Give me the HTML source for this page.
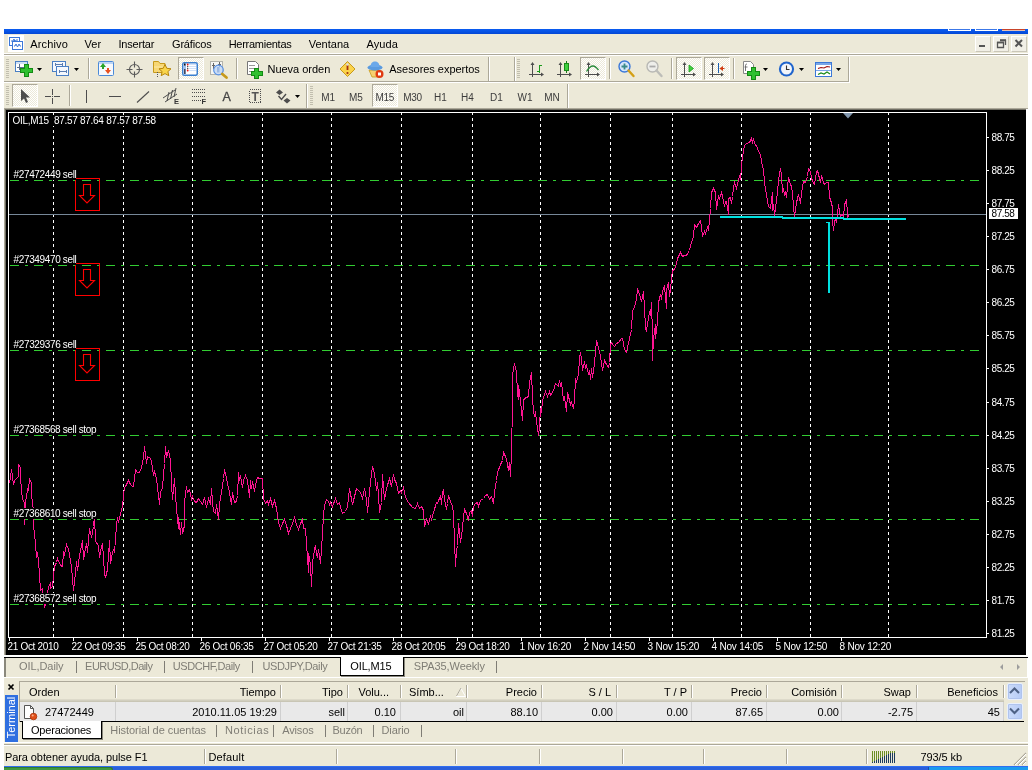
<!DOCTYPE html><html><head><meta charset="utf-8"><title>OIL,M15</title><style>
*{box-sizing:border-box;margin:0;padding:0}
html,body{width:1032px;height:770px;overflow:hidden;background:#fff}
body{position:relative;font-family:"Liberation Sans",sans-serif;font-size:11px;color:#000}
.a{position:absolute}
.t{position:absolute;white-space:pre;line-height:13px;height:13px}
.g{color:#7f7d75}
.win{left:4px;top:29px;width:1024px;height:737px;background:#ECE9D8}
.r{text-align:right}
.sep{position:absolute;width:2px;border-left:1px solid #aca899;border-right:1px solid #fff}
.grip{position:absolute;width:3px;background:repeating-linear-gradient(to bottom,#b5b2a3 0,#b5b2a3 1px,transparent 1px,transparent 2px)}
.pressed{position:absolute;border:1px solid;border-color:#aca899 #fff #fff #aca899;background-color:#ece9d8;background-image:conic-gradient(#fff 25%,#ece9d8 0 50%,#fff 0 75%,#ece9d8 0);background-size:2px 2px}
.ch{font-size:9px;line-height:11px;height:11px;color:#fff;background:#000;position:absolute;white-space:pre}
</style></head><body><div id="w" style="position:absolute;left:0;top:0;width:1032px;height:770px;will-change:transform">
<div class="a win"></div>
<div class="a" style="left:4px;top:29px;width:1024px;height:5px;background:linear-gradient(to bottom,#0a5cf0 0,#0855e8 40%,#0447d4 100%)"></div>
<div class="a" style="left:948px;top:29px;width:23px;height:2px;background:#3c78e8;border-bottom:1px solid #fff;border-left:1px solid #fff;border-right:1px solid #fff"></div>
<div class="a" style="left:975px;top:29px;width:23px;height:2px;background:#3c78e8;border-bottom:1px solid #fff;border-left:1px solid #fff;border-right:1px solid #fff"></div>
<div class="a" style="left:1002px;top:29px;width:23px;height:2px;background:#c8442a;border-bottom:1px solid #e8c0b0"></div>
<div class="a" style="left:4px;top:53px;width:1024px;height:1px;background:#fff"></div>
<div class="a" style="left:4px;top:54px;width:1024px;height:1px;background:#aca899"></div>
<div class="a" style="left:4px;top:55px;width:1024px;height:1px;background:#fff"></div>
<div class="t" style="left:30.2px;top:38px;letter-spacing:0.16px;">Archivo</div>
<div class="t" style="left:84.5px;top:38px;letter-spacing:0.10px;">Ver</div>
<div class="t" style="left:118.5px;top:38px;letter-spacing:-0.20px;">Insertar</div>
<div class="t" style="left:172.0px;top:38px;letter-spacing:-0.18px;">Gráficos</div>
<div class="t" style="left:228.7px;top:38px;letter-spacing:-0.27px;">Herramientas</div>
<div class="t" style="left:308.7px;top:38px;letter-spacing:0.02px;">Ventana</div>
<div class="t" style="left:366.5px;top:38px;letter-spacing:0.08px;">Ayuda</div>
<div class="a" style="left:4px;top:81px;width:845px;height:1px;background:#aca899"></div>
<div class="a" style="left:4px;top:82px;width:846px;height:1px;background:#fff"></div>
<div class="pressed" style="left:178px;top:57px;width:26px;height:23px"></div>
<div class="pressed" style="left:580px;top:57px;width:26px;height:23px"></div>
<div class="pressed" style="left:676px;top:57px;width:26px;height:23px"></div>
<div class="pressed" style="left:704px;top:57px;width:26px;height:23px"></div>
<div class="pressed" style="left:12px;top:84px;width:26px;height:23px"></div>
<div class="pressed" style="left:372px;top:84px;width:26px;height:23px"></div>
<svg class="a" style="left:0;top:0" width="1032" height="770" viewBox="0 0 1032 770" fill="none"><rect x="8" y="35" width="16" height="17" fill="#fff"/><g fill="#fff" stroke="#3b78d8" stroke-width="1" shape-rendering="crispEdges"><rect x="9.5" y="37.5" width="10" height="8"/><rect x="12.5" y="41.5" width="10" height="8"/></g><path d="M11 41h2l1-2 1 3 1-2h2M14 46h1l1-2 1.500 3 1.500-3 1 2h1" stroke="#3b78d8" fill="none" stroke-width="1"/><g shape-rendering="crispEdges" stroke="#c1beae"><path d="M6 59.5h3"/><path d="M6 61.5h3"/><path d="M6 63.5h3"/><path d="M6 65.5h3"/><path d="M6 67.5h3"/><path d="M6 69.5h3"/><path d="M6 71.5h3"/><path d="M6 73.5h3"/><path d="M6 75.5h3"/><path d="M6 77.5h3"/></g><g shape-rendering="crispEdges" stroke="#c1beae"><path d="M517 59.5h3"/><path d="M517 61.5h3"/><path d="M517 63.5h3"/><path d="M517 65.5h3"/><path d="M517 67.5h3"/><path d="M517 69.5h3"/><path d="M517 71.5h3"/><path d="M517 73.5h3"/><path d="M517 75.5h3"/><path d="M517 77.5h3"/></g><g shape-rendering="crispEdges" stroke="#c1beae"><path d="M6 86.5h3"/><path d="M6 88.5h3"/><path d="M6 90.5h3"/><path d="M6 92.5h3"/><path d="M6 94.5h3"/><path d="M6 96.5h3"/><path d="M6 98.5h3"/><path d="M6 100.5h3"/><path d="M6 102.5h3"/><path d="M6 104.5h3"/></g><g shape-rendering="crispEdges" stroke="#c1beae"><path d="M310 86.5h3"/><path d="M310 88.5h3"/><path d="M310 90.5h3"/><path d="M310 92.5h3"/><path d="M310 94.5h3"/><path d="M310 96.5h3"/><path d="M310 98.5h3"/><path d="M310 100.5h3"/><path d="M310 102.5h3"/><path d="M310 104.5h3"/></g><g shape-rendering="crispEdges"><rect x="15.5" y="61.5" width="12" height="10" fill="#fff" stroke="#4a7fc4"/><rect x="16" y="62" width="11" height="2" fill="#cfe0f5"/><path d="M19.500 64v6M17 67.500h8" stroke="#5a6f8f"/></g><path d="M24 64h4v4h4v4h-4v4h-4v-4h-4v-4h4z" fill="#2fc02f" stroke="#148a14" stroke-width="1" shape-rendering="crispEdges"/><path d="M37 68h5l-2.5 3z" fill="#000"/><g shape-rendering="crispEdges" fill="#f4f8fd" stroke="#4a7fc4"><rect x="52.500" y="61.500" width="13" height="10"/><rect x="56.500" y="66.500" width="12" height="9"/></g><path d="M55 64.500h8M59 71.500h8M55.500 63v3M62.500 63v3M59.500 70v3M66.500 70v3" stroke="#5a7db0" shape-rendering="crispEdges"/><path d="M74 68h5l-2.5 3z" fill="#000"/><path d="M88.5 58V79" stroke="#aca899" shape-rendering="crispEdges"/><path d="M89.5 58V79" stroke="#fff" shape-rendering="crispEdges"/><path d="M236.5 58V79" stroke="#aca899" shape-rendering="crispEdges"/><path d="M237.5 58V79" stroke="#fff" shape-rendering="crispEdges"/><path d="M609.5 58V79" stroke="#aca899" shape-rendering="crispEdges"/><path d="M610.5 58V79" stroke="#fff" shape-rendering="crispEdges"/><path d="M671.5 58V79" stroke="#aca899" shape-rendering="crispEdges"/><path d="M672.5 58V79" stroke="#fff" shape-rendering="crispEdges"/><path d="M733.5 58V79" stroke="#aca899" shape-rendering="crispEdges"/><path d="M734.5 58V79" stroke="#fff" shape-rendering="crispEdges"/><rect x="98.500" y="61.500" width="15" height="14" fill="#f6f9fd" stroke="#4a8ad8" rx="1"/><rect x="99" y="62" width="14" height="2" fill="#bcd5f5"/><path d="M103 63l-3 4h2v2h2v-2h2z" fill="#2aa52a"/><path d="M108 74l-3 -4h2v-2h2v2h2z" fill="#e8501e"/><circle cx="134.500" cy="69.500" r="5" fill="none" stroke="#5a5a5a" stroke-width="1.1"/><path d="M134.500 61.500v6M134.500 71.500v6M126.500 69.500h6M136.500 69.500h6" stroke="#5a5a5a" stroke-width="1.1"/><g transform="translate(0,1)"><path d="M153.500 63v-2.500h5l1.500 2h5v9h-11.500z" fill="#f7d774" stroke="#c79a1b"/><path d="M154 66h11" stroke="#fbe9a8"/></g><path d="M165 64.500l1.800 3.800 4.200 .5-3.100 2.800.9 4.100-3.800-2.100-3.800 2.100.9-4.100-3.100-2.800 4.200-.5z" fill="#f9d54a" stroke="#b8860b" stroke-width="1"/><path d="M157.500 72v5" stroke="#555" stroke-dasharray="1 1" shape-rendering="crispEdges"/><rect x="182.750" y="62.750" width="14.500" height="12.500" rx="1.500" fill="#fff" stroke="#3a7fd0" stroke-width="1.500"/><rect x="183.500" y="63.500" width="2.500" height="11" fill="#9ec0ee"/><rect x="184" y="63.500" width="1.500" height="2" fill="#111"/><rect x="184" y="69" width="1.500" height="5" fill="#445"/><g shape-rendering="crispEdges"><path d="M189 64.500h7M189 66.500h7M189 68.500h7M189 70.500h7" stroke="#cfe0f8"/></g><circle cx="187.700" cy="64.500" r=".9" fill="#f01010"/><circle cx="187.700" cy="70.500" r=".9" fill="#f01010"/><circle cx="187.700" cy="66.500" r=".7" fill="#444"/><circle cx="187.700" cy="68.500" r=".7" fill="#444"/><rect x="210.500" y="61.500" width="12" height="13" fill="#f6f6f2" stroke="#b4b4ac"/><path d="M213.500 63v6M219.500 62v5M212 65.500h3M218 64.500h3" stroke="#666" shape-rendering="crispEdges"/><circle cx="218.500" cy="70" r="4.800" fill="#bcd4f6" fill-opacity=".75" stroke="#5a92e4" stroke-width="1.200"/><path d="M217 67v5.500h2.500v-5.500" fill="#8fb0e0" fill-opacity=".8"/><path d="M222.300 74l4.200 3.500" stroke="#c79a1b" stroke-width="2.800" stroke-linecap="round"/><path d="M247.500 61.500h8l3 3v10h-11z" fill="#fff" stroke="#777"/><path d="M249 65.500h6M249 68.500h6M249 71.500h4" stroke="#999" shape-rendering="crispEdges"/><path d="M254 68h4v3h4v4h-4v3h-4v-3h-3v-4h3z" fill="#2fc02f" stroke="#148a14" shape-rendering="crispEdges"/><g transform="translate(0,1)"><path d="M347.500 60.500l7.500 7.500-7.500 7.500-7.500-7.500z" fill="#fbd34a" stroke="#c79a1b"/><path d="M347.500 64v5" stroke="#a03010" stroke-width="1.800"/><circle cx="347.500" cy="72" r="1.100" fill="#a03010"/><circle cx="347.500" cy="63.500" r="1.300" fill="#ddd"/></g><g transform="translate(0,1)"><path d="M369 69l3 7h7l2-6z" fill="#f6d070" stroke="#c79a1b" stroke-width=".8"/><ellipse cx="375" cy="66.500" rx="7.500" ry="3" fill="#5a9be0"/><path d="M370.500 66c0-4 2-5.500 4.500-5.500s4.500 1.500 4.500 5.500z" fill="#6aa8ea"/><circle cx="379.500" cy="73" r="4" fill="#e03a10"/><rect x="378" y="71.500" width="3" height="3" fill="#fff"/></g><path d="M488.500 57V81" stroke="#aca899" shape-rendering="crispEdges"/><path d="M489.500 57V81" stroke="#fff" shape-rendering="crispEdges"/><path d="M514.500 57V81" stroke="#aca899" shape-rendering="crispEdges"/><path d="M515.500 57V81" stroke="#fff" shape-rendering="crispEdges"/><path d="M848.500 57V82" stroke="#aca899" shape-rendering="crispEdges"/><path d="M849.500 57V83" stroke="#fff" shape-rendering="crispEdges"/><g stroke="#4d4d4d" stroke-width="1" fill="none" shape-rendering="crispEdges"><path d="M532.5 64V77M529 74.5H543"/></g><path d="M532.5 62l-2 3h4zM544 74.5l-3 -2v4z" fill="#4d4d4d"/><path d="M539.500 65v8M539 65.500h3M537 71.500h3" stroke="#1a9a1a" stroke-width="1" shape-rendering="crispEdges"/><g stroke="#4d4d4d" stroke-width="1" fill="none" shape-rendering="crispEdges"><path d="M560.5 64V77M557 74.5H571"/></g><path d="M560.5 62l-2 3h4zM572 74.5l-3 -2v4z" fill="#4d4d4d"/><path d="M566.500 61v12" stroke="#1a7a1a" shape-rendering="crispEdges"/><rect x="564.500" y="63.500" width="4" height="7" fill="#3fd03f" stroke="#1a8a1a" shape-rendering="crispEdges"/><g stroke="#4d4d4d" stroke-width="1" fill="none" shape-rendering="crispEdges"><path d="M588.5 64V77M585 74.5H599"/></g><path d="M588.5 62l-2 3h4zM600 74.5l-3 -2v4z" fill="#4d4d4d"/><path d="M586.500 71.500c2.500-4 4.500-5.500 6.500-5.500s3.500 1.500 5.500 4" fill="none" stroke="#2a8a3a" stroke-width="1.300"/><circle cx="624.500" cy="66.500" r="5.500" fill="#d6e6fb" stroke="#3b78d8" stroke-width="1.400"/><path d="M621.500 66.500h6M624.500 63.500v6" stroke="#3a8a8a" stroke-width="1.800"/><path d="M628.500 70.500l5 5.500" stroke="#d4a017" stroke-width="2.400" stroke-linecap="round"/><circle cx="652.500" cy="66.500" r="5.500" fill="#eeeeea" stroke="#b8b8b4" stroke-width="1.400"/><path d="M649.500 66.500h6" stroke="#aaa" stroke-width="1.800"/><path d="M656.500 70.500l5 5.500" stroke="#bdbdb8" stroke-width="2.400" stroke-linecap="round"/><g stroke="#4d4d4d" stroke-width="1" fill="none" shape-rendering="crispEdges"><path d="M684.5 64V77M681 74.5H695"/></g><path d="M684.5 62l-2 3h4zM696 74.5l-3 -2v4z" fill="#4d4d4d"/><path d="M689 65l4.500 3.500-4.500 3.500z" fill="#3fd03f" stroke="#1a9a1a" stroke-width=".8"/><g stroke="#4d4d4d" stroke-width="1" fill="none" shape-rendering="crispEdges"><path d="M712.5 64V77M709 74.5H723"/></g><path d="M712.5 62l-2 3h4zM724 74.5l-3 -2v4z" fill="#4d4d4d"/><path d="M718.500 63v10" stroke="#1a5fb0" stroke-width="1" shape-rendering="crispEdges"/><path d="M719.500 68.500l3.500-2.500v5z" fill="#d03a10"/><path d="M722 68.500h2.500" stroke="#d03a10"/><path d="M743.500 61.500h7l3 3v9h-10z" fill="#fff" stroke="#888"/><path d="M747 64c-1.500 0-1.500 1-1.500 2v5M744.500 67h3" stroke="#666" fill="none" stroke-width=".9"/><path d="M751 67h4v4h4v4h-4v4h-4v-4h-4v-4h4z" fill="#2fc02f" stroke="#148a14" shape-rendering="crispEdges"/><path d="M763 68h5l-2.5 3z" fill="#000"/><circle cx="786.500" cy="69" r="7.600" fill="#1f64cc"/><circle cx="786.500" cy="69" r="5.500" fill="#f2f5fa"/><path d="M786.500 65.500v4h3" stroke="#333" stroke-width="1.100" fill="none"/><path d="M799 68h5l-2.5 3z" fill="#000"/><g transform="translate(0,1)"><rect x="815.500" y="61.500" width="16" height="14" fill="#fff" stroke="#3b78d8"/><rect x="816" y="62" width="15" height="2" fill="#7aa7e8"/><path d="M816 69.500h15" stroke="#7aa7e8" shape-rendering="crispEdges"/></g><g transform="translate(0,1)"><path d="M818 67.500l3-1 3 .5 3-1.500 3 .5" stroke="#a01010" fill="none" stroke-width="1.200"/><path d="M818 73.500l3-1.500 3 1 3-2 3 2" stroke="#1a8a1a" fill="none" stroke-width="1.200"/></g><path d="M836 68h5l-2.5 3z" fill="#000"/><path d="M21 89v12l3-2.500 2 4.500 2-1-2-4.500h4z" fill="#4d4d4d"/><path d="M52.500 89v15M45 96.500h15" stroke="#4d4d4d" shape-rendering="crispEdges"/><rect x="51" y="95" width="3" height="3" fill="#ece9d8"/><rect x="52" y="96" width="1" height="1" fill="#4d4d4d"/><path d="M69.5 85V106" stroke="#aca899" shape-rendering="crispEdges"/><path d="M70.5 85V106" stroke="#fff" shape-rendering="crispEdges"/><path d="M86.500 90v13" stroke="#4d4d4d" shape-rendering="crispEdges"/><path d="M109 96.500h12" stroke="#4d4d4d" shape-rendering="crispEdges"/><path d="M137 102.500l12-11" stroke="#4d4d4d" stroke-width="1.100"/><path d="M163 98l12-8M165 102l12-8M167 101l2-9M170.500 99l2-9M174 97l2-9" stroke="#4d4d4d" stroke-width="1" fill="none"/><g stroke="#4d4d4d" stroke-dasharray="1 1" shape-rendering="crispEdges"><path d="M192 89.500h13M192 92.500h13M192 96.500h13M192 100.500h9"/></g><path d="M276 92.500L279.500 89.500L283 92.500L279.500 95Z M283.500 100.500L287 98L290.500 100.500L287 103.500Z" fill="#4d4d4d"/><path d="M278.500 96l3 3.500 4.500-5.500" stroke="#4d4d4d" fill="none" stroke-width="1.400"/><path d="M295 95h5l-2.5 3z" fill="#000"/><rect x="249.500" y="89.500" width="11" height="13" fill="none" stroke="#4d4d4d" stroke-dasharray="1 1" shape-rendering="crispEdges"/><path d="M306.500 84V108" stroke="#aca899" shape-rendering="crispEdges"/><path d="M307.500 84V108" stroke="#fff" shape-rendering="crispEdges"/><path d="M567.500 84V108" stroke="#aca899" shape-rendering="crispEdges"/><path d="M568.500 84V108" stroke="#fff" shape-rendering="crispEdges"/></svg>
<div class="t" style="left:267.5px;top:63px;letter-spacing:-0.02px;">Nueva orden</div>
<div class="t" style="left:389.3px;top:63px;letter-spacing:-0.04px;">Asesores expertos</div>
<div class="t" style="left:222.500px;top:90px;font-size:12.500px;color:#444;line-height:15px;height:15px;-webkit-text-stroke:.3px #444">A</div>
<div class="t" style="left:174px;top:97px;font-size:7.500px;font-weight:bold;color:#333;line-height:9px;height:9px">E</div>
<div class="t" style="left:201.500px;top:97px;font-size:7.500px;font-weight:bold;color:#333;line-height:9px;height:9px">F</div>
<div class="t" style="left:251.500px;top:90px;font-size:12px;font-weight:bold;color:#555;line-height:14px;height:14px">T</div>
<div class="t" style="left:321.3px;top:91px;letter-spacing:-0.15px;font-size:10px;color:#3c3c3c;">M1</div>
<div class="t" style="left:349.0px;top:91px;letter-spacing:-0.20px;font-size:10px;color:#3c3c3c;">M5</div>
<div class="t" style="left:375.5px;top:91px;letter-spacing:-0.28px;font-size:10px;color:#3c3c3c;">M15</div>
<div class="t" style="left:403.2px;top:91px;letter-spacing:-0.28px;font-size:10px;color:#3c3c3c;">M30</div>
<div class="t" style="left:434.1px;top:91px;letter-spacing:-0.19px;font-size:10px;color:#3c3c3c;">H1</div>
<div class="t" style="left:461.1px;top:91px;letter-spacing:-0.19px;font-size:10px;color:#3c3c3c;">H4</div>
<div class="t" style="left:490.1px;top:91px;letter-spacing:-0.19px;font-size:10px;color:#3c3c3c;">D1</div>
<div class="t" style="left:517.5px;top:91px;letter-spacing:0.00px;font-size:10px;color:#3c3c3c;">W1</div>
<div class="t" style="left:544.3px;top:91px;letter-spacing:-0.08px;font-size:10px;color:#3c3c3c;">MN</div>
<div class="a" style="left:975px;top:36px;width:16px;height:16px;background:#f1efe6;border:1px solid;border-color:#fff #c9c6b8 #c9c6b8 #fff"></div>
<div class="a" style="left:993px;top:36px;width:16px;height:16px;background:#f1efe6;border:1px solid;border-color:#fff #c9c6b8 #c9c6b8 #fff"></div>
<div class="a" style="left:1011px;top:36px;width:16px;height:16px;background:#f1efe6;border:1px solid;border-color:#fff #c9c6b8 #c9c6b8 #fff"></div>
<svg class="a" style="left:0;top:0" width="1032" height="770" viewBox="0 0 1032 770" fill="none"><path d="M979 46h6" stroke="#555" stroke-width="2"/><path d="M997.500 42.500h6v5h-6zM1000 40.500h5.500v4.500" stroke="#555" stroke-width="1.300"/><path d="M997 42.500h7M1000 40h6" stroke="#555" stroke-width="1.600"/><path d="M1015.500 40l6.500 6.500M1022 40l-6.500 6.500" stroke="#555" stroke-width="2"/></svg>
<div class="a" style="left:4px;top:108px;width:1024px;height:1px;background:#aca899"></div>
<div class="a" style="left:4px;top:109px;width:1px;height:546px;background:#aca899"></div>
<div class="a" style="left:5px;top:109px;width:1021px;height:546px;background:#000;border-left:1px solid #716f64;border-top:1px solid #716f64"></div>
<div class="a" style="left:1026px;top:109px;width:2px;height:548px;background:#fff"></div>
<svg class="a" style="left:0;top:0" width="1032" height="770" viewBox="0 0 1032 770" shape-rendering="crispEdges" fill="none">
<path d="M8.5 637.5V112.5H986.5V637.5H8.5" stroke="#fff" stroke-width="1"/>
<path d="M53.5 112V637" stroke="#fff" stroke-width="1" stroke-dasharray="3 3"/>
<path d="M123.5 112V637" stroke="#fff" stroke-width="1" stroke-dasharray="3 3"/>
<path d="M192.5 112V637" stroke="#fff" stroke-width="1" stroke-dasharray="3 3"/>
<path d="M262.5 112V637" stroke="#fff" stroke-width="1" stroke-dasharray="3 3"/>
<path d="M331.5 112V637" stroke="#fff" stroke-width="1" stroke-dasharray="3 3"/>
<path d="M401.5 112V637" stroke="#fff" stroke-width="1" stroke-dasharray="3 3"/>
<path d="M472.5 112V637" stroke="#fff" stroke-width="1" stroke-dasharray="3 3"/>
<path d="M540.5 112V637" stroke="#fff" stroke-width="1" stroke-dasharray="3 3"/>
<path d="M610.5 112V637" stroke="#fff" stroke-width="1" stroke-dasharray="3 3"/>
<path d="M672.5 112V637" stroke="#fff" stroke-width="1" stroke-dasharray="3 3"/>
<path d="M741.5 112V637" stroke="#fff" stroke-width="1" stroke-dasharray="3 3"/>
<path d="M810.5 112V637" stroke="#fff" stroke-width="1" stroke-dasharray="3 3"/>
<path d="M888.5 112V637" stroke="#fff" stroke-width="1" stroke-dasharray="3 3"/>
<path d="M10 180.5H984" stroke="#32cd32" stroke-width="1" stroke-dasharray="9 6 3 6"/>
<path d="M10 265.5H984" stroke="#32cd32" stroke-width="1" stroke-dasharray="9 6 3 6"/>
<path d="M10 350.5H984" stroke="#32cd32" stroke-width="1" stroke-dasharray="9 6 3 6"/>
<path d="M10 435.5H984" stroke="#32cd32" stroke-width="1" stroke-dasharray="9 6 3 6"/>
<path d="M10 519.5H984" stroke="#32cd32" stroke-width="1" stroke-dasharray="9 6 3 6"/>
<path d="M10 604.5H984" stroke="#32cd32" stroke-width="1" stroke-dasharray="9 6 3 6"/>
<path d="M9 214.5H986" stroke="#778899" stroke-width="1"/>
<path d="M987 137.5H989" stroke="#fff"/>
<path d="M987 170.5H989" stroke="#fff"/>
<path d="M987 203.5H989" stroke="#fff"/>
<path d="M987 236.5H989" stroke="#fff"/>
<path d="M987 269.5H989" stroke="#fff"/>
<path d="M987 302.5H989" stroke="#fff"/>
<path d="M987 335.5H989" stroke="#fff"/>
<path d="M987 368.5H989" stroke="#fff"/>
<path d="M987 402.5H989" stroke="#fff"/>
<path d="M987 435.5H989" stroke="#fff"/>
<path d="M987 468.5H989" stroke="#fff"/>
<path d="M987 501.5H989" stroke="#fff"/>
<path d="M987 534.5H989" stroke="#fff"/>
<path d="M987 567.5H989" stroke="#fff"/>
<path d="M987 600.5H989" stroke="#fff"/>
<path d="M987 633.5H989" stroke="#fff"/>
<path d="M9.5 638V641" stroke="#fff"/>
<path d="M73.5 638V641" stroke="#fff"/>
<path d="M137.5 638V641" stroke="#fff"/>
<path d="M201.5 638V641" stroke="#fff"/>
<path d="M265.5 638V641" stroke="#fff"/>
<path d="M329.5 638V641" stroke="#fff"/>
<path d="M393.5 638V641" stroke="#fff"/>
<path d="M457.5 638V641" stroke="#fff"/>
<path d="M521.5 638V641" stroke="#fff"/>
<path d="M585.5 638V641" stroke="#fff"/>
<path d="M649.5 638V641" stroke="#fff"/>
<path d="M713.5 638V641" stroke="#fff"/>
<path d="M777.5 638V641" stroke="#fff"/>
<path d="M841.5 638V641" stroke="#fff"/>
<path d="M75.5 178.5H99.5V210.5H75.500Z" stroke="#ff0000"/>
<path d="M83.500 184.5H90.500V195.5H94.500L87 203L79.500 195.5H83.500Z" stroke="#ff0000" shape-rendering="auto" stroke-width="1.1"/>
<path d="M75.5 263.5H99.5V295.5H75.500Z" stroke="#ff0000"/>
<path d="M83.500 269.5H90.500V280.5H94.500L87 288L79.500 280.5H83.500Z" stroke="#ff0000" shape-rendering="auto" stroke-width="1.1"/>
<path d="M75.5 348.5H99.5V380.5H75.500Z" stroke="#ff0000"/>
<path d="M83.500 354.5H90.500V365.5H94.500L87 373L79.500 365.5H83.500Z" stroke="#ff0000" shape-rendering="auto" stroke-width="1.1"/>
<path d="M843 113h10l-5 5.500z" fill="#8196ad" stroke="none" shape-rendering="auto"/>
<path d="M9.5 483.5 11.5 469.5 13.5 484.5 14.5 480.5 18.5 476.5 18.5 464.5 20.5 467.5 20.5 477.5 21.5 490.5 22.5 499.5 24.5 502.5 24.5 524.5 25.5 502.5 27.5 490.5 28.5 486.5 28.5 490.5 29.5 478.5 31.5 483.5 31.5 494.5 33.5 510.5 33.5 525.5 35.5 543.5 36.5 557.5 37.5 552.5 38.5 560.5 39.5 575.5 40.5 590.5 42.5 588.5 43.5 596.5 44.5 607.5 45.5 604.5 47.5 593.5 48.5 587.5 50.5 582.5 50.5 588.5 52.5 586.5 54.5 566.5 56.5 562.5 57.5 558.5 60.5 565.5 62.5 566.5 63.5 552.5 64.5 554.5 66.5 544.5 68.5 549.5 71.5 566.5 73.5 590.5 75.5 572.5 76.5 561.5 77.5 570.5 79.5 555.5 82.5 540.5 83.5 559.5 86.5 543.5 87.5 552.5 89.5 528.5 91.5 537.5 93.5 526.5 94.5 516.5 95.5 541.5 98.5 545.5 99.5 557.5 101.5 546.5 102.5 543.5 103.5 557.5 104.5 573.5 105.5 577.5 107.5 569.5 109.5 540.5 110.5 563.5 112.5 552.5 114.5 547.5 114.5 552.5 116.5 525.5 117.5 517.5 118.5 522.5 120.5 513.5 122.5 506.5 123.5 495.5 124.5 487.5 125.5 486.5 128.5 480.5 130.5 484.5 132.5 486.5 133.5 486.5 135.5 469.5 137.5 472.5 139.5 472.5 141.5 467.5 143.5 457.5 144.5 446.5 146.5 463.5 147.5 456.5 150.5 458.5 151.5 461.5 153.5 475.5 154.5 471.5 156.5 478.5 159.5 504.5 160.5 492.5 162.5 487.5 164.5 463.5 165.5 446.5 166.5 457.5 168.5 450.5 170.5 460.5 171.5 483.5 172.5 499.5 174.5 478.5 175.5 494.5 176.5 508.5 178.5 528.5 178.5 517.5 180.5 534.5 181.5 522.5 182.5 533.5 184.5 525.5 184.5 501.5 186.5 486.5 187.5 492.5 189.5 489.5 191.5 499.5 192.5 496.5 194.5 501.5 196.5 502.5 198.5 498.5 202.5 504.5 204.5 497.5 206.5 507.5 208.5 498.5 210.5 504.5 211.5 488.5 212.5 501.5 213.5 511.5 215.5 513.5 216.5 504.5 218.5 519.5 219.5 504.5 221.5 492.5 223.5 478.5 224.5 469.5 226.5 478.5 229.5 492.5 231.5 504.5 232.5 492.5 234.5 502.5 236.5 501.5 237.5 495.5 238.5 472.5 239.5 480.5 240.5 475.5 242.5 487.5 243.5 480.5 245.5 475.5 247.5 480.5 249.5 497.5 250.5 480.5 251.5 488.5 252.5 481.5 254.5 491.5 255.5 484.5 257.5 477.5 259.5 478.5 262.5 478.5 263.5 498.5 265.5 503.5 267.5 500.5 268.5 504.5 270.5 498.5 272.5 506.5 274.5 500.5 276.5 508.5 278.5 522.5 280.5 528.5 282.5 523.5 284.5 519.5 286.5 525.5 288.5 533.5 290.5 528.5 292.5 523.5 294.5 517.5 296.5 524.5 298.5 529.5 300.5 523.5 302.5 519.5 303.5 528.5 305.5 528.5 306.5 543.5 308.5 572.5 308.5 553.5 310.5 564.5 311.5 586.5 312.5 562.5 314.5 549.5 315.5 545.5 316.5 554.5 317.5 556.5 318.5 549.5 320.5 563.5 321.5 549.5 322.5 532.5 323.5 515.5 324.5 505.5 326.5 499.5 328.5 501.5 329.5 504.5 330.5 502.5 332.5 506.5 335.5 498.5 337.5 504.5 339.5 502.5 341.5 510.5 342.5 513.5 345.5 511.5 347.5 506.5 349.5 488.5 352.5 504.5 354.5 496.5 356.5 488.5 360.5 492.5 362.5 498.5 364.5 488.5 366.5 499.5 367.5 512.5 369.5 491.5 371.5 473.5 372.5 466.5 374.5 473.5 376.5 490.5 377.5 482.5 378.5 494.5 379.5 512.5 381.5 502.5 382.5 474.5 383.5 487.5 384.5 499.5 386.5 488.5 389.5 478.5 391.5 486.5 393.5 474.5 394.5 479.5 396.5 483.5 398.5 493.5 400.5 490.5 401.5 492.5 403.5 487.5 405.5 497.5 408.5 502.5 412.5 507.5 415.5 508.5 417.5 503.5 419.5 508.5 421.5 506.5 423.5 510.5 424.5 526.5 426.5 519.5 428.5 523.5 430.5 516.5 431.5 519.5 433.5 512.5 436.5 502.5 437.5 503.5 440.5 495.5 441.5 504.5 442.5 492.5 443.5 489.5 444.5 499.5 446.5 509.5 447.5 503.5 448.5 495.5 450.5 501.5 452.5 506.5 453.5 513.5 454.5 541.5 455.5 566.5 456.5 550.5 457.5 545.5 458.5 523.5 460.5 542.5 462.5 528.5 463.5 516.5 464.5 509.5 466.5 513.5 468.5 520.5 469.5 512.5 471.5 510.5 472.5 516.5 473.5 506.5 475.5 503.5 477.5 502.5 478.5 506.5 480.5 500.5 483.5 498.5 485.5 495.5 487.5 494.5 489.5 499.5 491.5 496.5 493.5 503.5 494.5 492.5 496.5 480.5 497.5 472.5 500.5 464.5 502.5 460.5 503.5 451.5 506.5 459.5 508.5 470.5 509.5 462.5 510.5 476.5 511.5 452.5 512.5 404.5 512.5 374.5 514.5 363.5 516.5 371.5 517.5 394.5 518.5 399.5 518.5 385.5 520.5 400.5 522.5 420.5 523.5 400.5 524.5 398.5 528.5 396.5 529.5 382.5 531.5 372.5 532.5 397.5 533.5 411.5 534.5 416.5 535.5 411.5 536.5 421.5 538.5 435.5 539.5 426.5 540.5 408.5 541.5 412.5 542.5 400.5 544.5 394.5 545.5 391.5 547.5 396.5 549.5 391.5 550.5 395.5 553.5 390.5 555.5 383.5 558.5 386.5 559.5 380.5 560.5 385.5 561.5 382.5 562.5 391.5 563.5 399.5 564.5 397.5 566.5 411.5 567.5 392.5 569.5 400.5 570.5 404.5 571.5 402.5 573.5 408.5 574.5 399.5 575.5 378.5 576.5 382.5 578.5 373.5 579.5 358.5 580.5 352.5 581.5 359.5 582.5 370.5 584.5 361.5 585.5 368.5 586.5 365.5 588.5 374.5 589.5 370.5 590.5 379.5 591.5 368.5 592.5 377.5 594.5 363.5 595.5 351.5 596.5 340.5 598.5 347.5 600.5 356.5 602.5 370.5 604.5 360.5 606.5 364.5 608.5 367.5 609.5 362.5 610.5 344.5 611.5 342.5 613.5 345.5 614.5 346.5 616.5 343.5 618.5 342.5 621.5 338.5 622.5 338.5 624.5 349.5 626.5 352.5 627.5 347.5 629.5 338.5 631.5 329.5 632.5 311.5 634.5 306.5 636.5 299.5 637.5 288.5 639.5 294.5 641.5 301.5 642.5 296.5 643.5 291.5 644.5 307.5 645.5 328.5 646.5 330.5 648.5 318.5 649.5 311.5 650.5 315.5 651.5 302.5 652.5 334.5 652.5 360.5 653.5 338.5 655.5 324.5 655.5 338.5 657.5 321.5 658.5 302.5 660.5 294.5 661.5 299.5 662.5 291.5 664.5 285.5 665.5 297.5 666.5 308.5 666.5 289.5 668.5 282.5 669.5 296.5 670.5 289.5 671.5 278.5 672.5 270.5 674.5 269.5 676.5 263.5 677.5 258.5 680.5 252.5 682.5 256.5 684.5 255.5 686.5 255.5 689.5 250.5 691.5 242.5 693.5 236.5 694.5 224.5 696.5 227.5 698.5 223.5 700.5 220.5 701.5 226.5 702.5 236.5 704.5 231.5 705.5 233.5 707.5 227.5 708.5 230.5 710.5 208.5 711.5 192.5 713.5 188.5 715.5 192.5 716.5 209.5 718.5 195.5 719.5 198.5 721.5 192.5 722.5 196.5 724.5 206.5 725.5 201.5 726.5 201.5 728.5 214.5 728.5 198.5 730.5 197.5 731.5 203.5 732.5 196.5 733.5 187.5 734.5 182.5 736.5 188.5 738.5 180.5 739.5 175.5 740.5 179.5 741.5 166.5 742.5 156.5 744.5 145.5 746.5 143.5 749.5 142.5 751.5 138.5 752.5 142.5 753.5 139.5 755.5 145.5 756.5 145.5 758.5 151.5 760.5 154.5 761.5 161.5 763.5 169.5 764.5 182.5 765.5 188.5 767.5 200.5 768.5 206.5 770.5 208.5 771.5 200.5 772.5 192.5 772.5 210.5 773.5 204.5 774.5 215.5 776.5 200.5 777.5 192.5 778.5 180.5 780.5 168.5 781.5 174.5 782.5 192.5 783.5 188.5 784.5 194.5 785.5 192.5 786.5 197.5 787.5 186.5 788.5 177.5 790.5 184.5 791.5 186.5 792.5 193.5 793.5 206.5 794.5 216.5 795.5 209.5 796.5 202.5 798.5 194.5 800.5 203.5 801.5 193.5 803.5 181.5 805.5 182.5 807.5 176.5 808.5 168.5 810.5 171.5 811.5 177.5 812.5 181.5 814.5 184.5 816.5 171.5 817.5 170.5 819.5 178.5 820.5 182.5 821.5 175.5 823.5 182.5 824.5 184.5 826.5 182.5 828.5 182.5 829.5 197.5 830.5 199.5 832.5 207.5 832.5 221.5 833.5 230.5 834.5 221.5 835.5 219.5 836.5 221.5 838.5 204.5 838.5 204.5 840.5 216.5 842.5 214.5 843.5 217.5 844.5 204.5 846.5 200.5 847.5 213.5 847.5 217.5 848.5 215.5" stroke="#ff1493" stroke-width="1" stroke-linejoin="miter"/>
<path d="M720 217H783M782 218H844M843 219H906" stroke="#00e0e0" stroke-width="2"/>
<path d="M829 222V293" stroke="#00e0e0" stroke-width="2"/><path d="M826 222.500h3" stroke="#00e0e0"/>
</svg>
<div class="ch" style="left:991.5px;top:132px;letter-spacing:-0.40px;font-size:10px;">88.75</div>
<div class="ch" style="left:991.5px;top:165px;letter-spacing:-0.40px;font-size:10px;">88.25</div>
<div class="ch" style="left:991.5px;top:198px;letter-spacing:-0.40px;font-size:10px;">87.75</div>
<div class="ch" style="left:991.5px;top:231px;letter-spacing:-0.40px;font-size:10px;">87.25</div>
<div class="ch" style="left:991.5px;top:264px;letter-spacing:-0.40px;font-size:10px;">86.75</div>
<div class="ch" style="left:991.5px;top:297px;letter-spacing:-0.40px;font-size:10px;">86.25</div>
<div class="ch" style="left:991.5px;top:330px;letter-spacing:-0.40px;font-size:10px;">85.75</div>
<div class="ch" style="left:991.5px;top:363px;letter-spacing:-0.40px;font-size:10px;">85.25</div>
<div class="ch" style="left:991.5px;top:397px;letter-spacing:-0.40px;font-size:10px;">84.75</div>
<div class="ch" style="left:991.5px;top:430px;letter-spacing:-0.40px;font-size:10px;">84.25</div>
<div class="ch" style="left:991.5px;top:463px;letter-spacing:-0.40px;font-size:10px;">83.75</div>
<div class="ch" style="left:991.5px;top:496px;letter-spacing:-0.40px;font-size:10px;">83.25</div>
<div class="ch" style="left:991.5px;top:529px;letter-spacing:-0.40px;font-size:10px;">82.75</div>
<div class="ch" style="left:991.5px;top:562px;letter-spacing:-0.40px;font-size:10px;">82.25</div>
<div class="ch" style="left:991.5px;top:595px;letter-spacing:-0.40px;font-size:10px;">81.75</div>
<div class="ch" style="left:991.5px;top:628px;letter-spacing:-0.40px;font-size:10px;">81.25</div>
<div class="a" style="left:989px;top:208px;width:29px;height:11px;background:#fff"></div>
<div class="ch" style="left:991.5px;top:208px;letter-spacing:-0.40px;font-size:10px;color:#000;background:none;">87.58</div>
<div class="ch" style="left:7.5px;top:641px;letter-spacing:-0.32px;font-size:10px;">21 Oct 2010</div>
<div class="ch" style="left:71.5px;top:641px;letter-spacing:-0.27px;font-size:10px;">22 Oct 09:35</div>
<div class="ch" style="left:135.5px;top:641px;letter-spacing:-0.27px;font-size:10px;">25 Oct 08:20</div>
<div class="ch" style="left:199.5px;top:641px;letter-spacing:-0.27px;font-size:10px;">26 Oct 06:35</div>
<div class="ch" style="left:263.5px;top:641px;letter-spacing:-0.27px;font-size:10px;">27 Oct 05:20</div>
<div class="ch" style="left:327.5px;top:641px;letter-spacing:-0.27px;font-size:10px;">27 Oct 21:35</div>
<div class="ch" style="left:391.5px;top:641px;letter-spacing:-0.27px;font-size:10px;">28 Oct 20:05</div>
<div class="ch" style="left:455.5px;top:641px;letter-spacing:-0.27px;font-size:10px;">29 Oct 18:20</div>
<div class="ch" style="left:519.5px;top:641px;letter-spacing:-0.21px;font-size:10px;">1 Nov 16:20</div>
<div class="ch" style="left:583.5px;top:641px;letter-spacing:-0.21px;font-size:10px;">2 Nov 14:50</div>
<div class="ch" style="left:647.5px;top:641px;letter-spacing:-0.21px;font-size:10px;">3 Nov 15:20</div>
<div class="ch" style="left:711.5px;top:641px;letter-spacing:-0.21px;font-size:10px;">4 Nov 14:05</div>
<div class="ch" style="left:775.5px;top:641px;letter-spacing:-0.21px;font-size:10px;">5 Nov 12:50</div>
<div class="ch" style="left:839.5px;top:641px;letter-spacing:-0.21px;font-size:10px;">8 Nov 12:20</div>
<div class="ch" style="left:12.5px;top:115px;letter-spacing:-0.28px;font-size:10px;">OIL,M15  87.57 87.64 87.57 87.58</div>
<div class="ch" style="left:13.5px;top:169px;letter-spacing:-0.35px;font-size:10px;">#27472449 sell</div>
<div class="ch" style="left:13.5px;top:254px;letter-spacing:-0.35px;font-size:10px;">#27349470 sell</div>
<div class="ch" style="left:13.5px;top:339px;letter-spacing:-0.35px;font-size:10px;">#27329376 sell</div>
<div class="ch" style="left:13.5px;top:424px;letter-spacing:-0.36px;font-size:10px;">#27368568 sell stop</div>
<div class="ch" style="left:13.5px;top:508px;letter-spacing:-0.36px;font-size:10px;">#27368610 sell stop</div>
<div class="ch" style="left:13.5px;top:593px;letter-spacing:-0.36px;font-size:10px;">#27368572 sell stop</div>
<div class="a" style="left:4px;top:655px;width:1024px;height:2px;background:#fff"></div>
<div class="a" style="left:4px;top:657px;width:1024px;height:1px;background:#000"></div>
<div class="a" style="left:4px;top:658px;width:2px;height:19px;background:#8a887c"></div>
<div class="a" style="left:4px;top:677px;width:1024px;height:1px;background:#fff"></div>
<div class="t g" style="left:19.1px;top:660px;letter-spacing:-0.09px;">OIL,Daily</div>
<div class="a" style="left:76px;top:661px;width:1px;height:12px;background:#7f7d75"></div>
<div class="t g" style="left:85.1px;top:660px;letter-spacing:-0.55px;">EURUSD,Daily</div>
<div class="a" style="left:164px;top:661px;width:1px;height:12px;background:#7f7d75"></div>
<div class="t g" style="left:172.8px;top:660px;letter-spacing:-0.43px;">USDCHF,Daily</div>
<div class="a" style="left:252px;top:661px;width:1px;height:12px;background:#7f7d75"></div>
<div class="t g" style="left:262.5px;top:660px;letter-spacing:-0.39px;">USDJPY,Daily</div>
<div class="t g" style="left:413.7px;top:660px;letter-spacing:-0.10px;">SPA35,Weekly</div>
<div class="a" style="left:496px;top:661px;width:1px;height:12px;background:#7f7d75"></div>
<div class="a" style="left:1027px;top:658px;width:1px;height:19px;background:#fff"></div>
<div class="a" style="left:340px;top:657px;width:64px;height:19px;background:#fff;border:1px solid #000;border-top:none;box-shadow:1px 1px 0 #8a887c"></div>
<div class="t" style="left:350.3px;top:660px;letter-spacing:-0.14px;">OIL,M15</div>
<svg class="a" style="left:0;top:0" width="1032" height="770" viewBox="0 0 1032 770"><path d="M1003 664v6l-3-3zM1017 664v6l3-3z" fill="#9d9d9d"/></svg>
<div class="a" style="left:5px;top:695px;width:13px;height:47px;background:#2f6fe0"></div>
<div class="t" style="left:-12px;top:711px;width:47px;color:#fff;transform:rotate(-90deg);text-align:center;letter-spacing:0px">Terminal</div>
<svg class="a" style="left:0;top:0" width="1032" height="770" viewBox="0 0 1032 770"><path d="M8.500 684.500l5 5M13.500 684.500l-5 5" stroke="#000" stroke-width="1.700"/></svg>
<div class="a" style="left:19px;top:681px;width:1006px;height:41px;border-top:1px solid #aca899;border-left:1px solid #aca899"></div>
<div class="a" style="left:20px;top:682px;width:1004px;height:19px;background:#ece9d8"></div>
<div class="a" style="left:20px;top:699px;width:984px;height:3px;background:linear-gradient(to bottom,#e2dfd0,#d2cfbf,#c4c1b0)"></div>
<div class="a" style="left:20px;top:702px;width:984px;height:19px;background:#e9e9e9"></div>
<div class="a" style="left:20px;top:721px;width:1004px;height:1px;background:#000"></div>
<div class="t" style="left:29px;top:686px">Orden</div>
<div class="a" style="left:115px;top:685px;width:1px;height:13px;background:#aca899"></div><div class="a" style="left:116px;top:685px;width:1px;height:13px;background:#fff"></div>
<div class="a" style="left:115px;top:702px;width:1px;height:19px;background:#cfcfcf"></div>
<div class="t r" style="left:156px;width:120px;top:686px">Tiempo</div>
<div class="a" style="left:280px;top:685px;width:1px;height:13px;background:#aca899"></div><div class="a" style="left:281px;top:685px;width:1px;height:13px;background:#fff"></div>
<div class="a" style="left:280px;top:702px;width:1px;height:19px;background:#cfcfcf"></div>
<div class="t r" style="left:223px;width:120px;top:686px">Tipo</div>
<div class="a" style="left:347px;top:685px;width:1px;height:13px;background:#aca899"></div><div class="a" style="left:348px;top:685px;width:1px;height:13px;background:#fff"></div>
<div class="a" style="left:347px;top:702px;width:1px;height:19px;background:#cfcfcf"></div>
<div class="t r" style="left:269px;width:120px;top:686px">Volu...</div>
<div class="a" style="left:400px;top:685px;width:1px;height:13px;background:#aca899"></div><div class="a" style="left:401px;top:685px;width:1px;height:13px;background:#fff"></div>
<div class="a" style="left:400px;top:702px;width:1px;height:19px;background:#cfcfcf"></div>
<div class="t" style="left:409px;top:686px">Símb...</div>
<div class="a" style="left:466px;top:685px;width:1px;height:13px;background:#aca899"></div><div class="a" style="left:467px;top:685px;width:1px;height:13px;background:#fff"></div>
<div class="a" style="left:466px;top:702px;width:1px;height:19px;background:#cfcfcf"></div>
<div class="t r" style="left:417px;width:120px;top:686px">Precio</div>
<div class="a" style="left:541px;top:685px;width:1px;height:13px;background:#aca899"></div><div class="a" style="left:542px;top:685px;width:1px;height:13px;background:#fff"></div>
<div class="a" style="left:541px;top:702px;width:1px;height:19px;background:#cfcfcf"></div>
<div class="t r" style="left:491px;width:120px;top:686px">S / L</div>
<div class="a" style="left:616px;top:685px;width:1px;height:13px;background:#aca899"></div><div class="a" style="left:617px;top:685px;width:1px;height:13px;background:#fff"></div>
<div class="a" style="left:616px;top:702px;width:1px;height:19px;background:#cfcfcf"></div>
<div class="t r" style="left:567px;width:120px;top:686px">T / P</div>
<div class="a" style="left:691px;top:685px;width:1px;height:13px;background:#aca899"></div><div class="a" style="left:692px;top:685px;width:1px;height:13px;background:#fff"></div>
<div class="a" style="left:691px;top:702px;width:1px;height:19px;background:#cfcfcf"></div>
<div class="t r" style="left:642px;width:120px;top:686px">Precio</div>
<div class="a" style="left:766px;top:685px;width:1px;height:13px;background:#aca899"></div><div class="a" style="left:767px;top:685px;width:1px;height:13px;background:#fff"></div>
<div class="a" style="left:766px;top:702px;width:1px;height:19px;background:#cfcfcf"></div>
<div class="t r" style="left:717px;width:120px;top:686px">Comisión</div>
<div class="a" style="left:841px;top:685px;width:1px;height:13px;background:#aca899"></div><div class="a" style="left:842px;top:685px;width:1px;height:13px;background:#fff"></div>
<div class="a" style="left:841px;top:702px;width:1px;height:19px;background:#cfcfcf"></div>
<div class="t r" style="left:791px;width:120px;top:686px">Swap</div>
<div class="a" style="left:916px;top:685px;width:1px;height:13px;background:#aca899"></div><div class="a" style="left:917px;top:685px;width:1px;height:13px;background:#fff"></div>
<div class="a" style="left:916px;top:702px;width:1px;height:19px;background:#cfcfcf"></div>
<div class="t r" style="left:878px;width:120px;top:686px">Beneficios</div>
<div class="a" style="left:1003px;top:685px;width:1px;height:13px;background:#aca899"></div><div class="a" style="left:1004px;top:685px;width:1px;height:13px;background:#fff"></div>
<div class="a" style="left:1003px;top:702px;width:1px;height:19px;background:#cfcfcf"></div>
<svg class="a" style="left:0;top:0" width="1032" height="770" viewBox="0 0 1032 770"><path d="M456.500 696.500l4.500-8 4.500 8z" fill="none" stroke="#fff"/><path d="M456.500 696l4.500-8" stroke="#aca899" fill="none"/></svg>
<div class="t" style="left:45px;top:706px">27472449</div>
<div class="t r" style="left:157px;width:120px;top:706px">2010.11.05 19:29</div>
<div class="t r" style="left:225px;width:120px;top:706px">sell</div>
<div class="t r" style="left:276px;width:120px;top:706px">0.10</div>
<div class="t r" style="left:344px;width:120px;top:706px">oil</div>
<div class="t r" style="left:418px;width:120px;top:706px">88.10</div>
<div class="t r" style="left:493px;width:120px;top:706px">0.00</div>
<div class="t r" style="left:568px;width:120px;top:706px">0.00</div>
<div class="t r" style="left:643px;width:120px;top:706px">87.65</div>
<div class="t r" style="left:719px;width:120px;top:706px">0.00</div>
<div class="t r" style="left:793px;width:120px;top:706px">-2.75</div>
<div class="t r" style="left:880px;width:120px;top:706px">45</div>
<svg class="a" style="left:0;top:0" width="1032" height="770" viewBox="0 0 1032 770"><path d="M24.500 705.500h6l3 3v10h-9z" fill="#fff" stroke="#555"/><path d="M30.500 705.500v3h3" fill="none" stroke="#555"/><circle cx="33.500" cy="716.500" r="3.300" fill="#e0501a" stroke="#a83208" stroke-width=".8"/><circle cx="32.700" cy="715.500" r="1" fill="#f8b090"/></svg>
<div class="a" style="left:1007px;top:683px;width:16px;height:17px;background:linear-gradient(to right,#cbdbfa,#b6cbf6);border:1px solid #e8effc;border-radius:2px;box-shadow:0 0 0 1px #b0c4ee inset"></div>
<svg class="a" style="left:0;top:0" width="1032" height="770" viewBox="0 0 1032 770"><path d="M1010 693l4.500-4.500 4.500 4.500" stroke="#4d6185" stroke-width="2" fill="none"/></svg>
<div class="a" style="left:1007px;top:703px;width:16px;height:17px;background:linear-gradient(to right,#cbdbfa,#b6cbf6);border:1px solid #e8effc;border-radius:2px;box-shadow:0 0 0 1px #b0c4ee inset"></div>
<svg class="a" style="left:0;top:0" width="1032" height="770" viewBox="0 0 1032 770"><path d="M1010 708.500l4.500 4.500 4.500-4.500" stroke="#4d6185" stroke-width="2" fill="none"/></svg>
<div class="a" style="left:22px;top:721px;width:80px;height:18px;background:#fff;border:1px solid #000;border-top:none;box-shadow:1px 1px 0 #8a887c"></div>
<div class="t" style="left:31.0px;top:724px;letter-spacing:-0.20px;">Operaciones</div>
<div class="t g" style="left:110.3px;top:724px;letter-spacing:-0.05px;">Historial de cuentas</div>
<div class="a" style="left:216px;top:725px;width:1px;height:12px;background:#7f7d75"></div>
<div class="t g" style="left:224.9px;top:724px;letter-spacing:0.67px;">Noticias</div>
<div class="a" style="left:273px;top:725px;width:1px;height:12px;background:#7f7d75"></div>
<div class="t g" style="left:282.2px;top:724px;letter-spacing:-0.15px;">Avisos</div>
<div class="a" style="left:325px;top:725px;width:1px;height:12px;background:#7f7d75"></div>
<div class="t g" style="left:332.5px;top:724px;letter-spacing:-0.24px;">Buzón</div>
<div class="a" style="left:373px;top:725px;width:1px;height:12px;background:#7f7d75"></div>
<div class="t g" style="left:381.5px;top:724px;letter-spacing:-0.12px;">Diario</div>
<div class="a" style="left:421px;top:725px;width:1px;height:12px;background:#7f7d75"></div>
<div class="a" style="left:4px;top:742px;width:1024px;height:1px;background:#fff"></div>
<div class="a" style="left:4px;top:744px;width:1024px;height:1px;background:#aca899"></div>
<div class="a" style="left:4px;top:745px;width:1024px;height:1px;background:#fff"></div>
<div class="t" style="left:5.0px;top:751px;letter-spacing:-0.09px;">Para obtener ayuda, pulse F1</div>
<div class="t" style="left:208.5px;top:751px;letter-spacing:0.14px;">Default</div>
<div class="t" style="left:920.5px;top:751px;letter-spacing:-0.10px;">793/5 kb</div>
<div class="a" style="left:204px;top:749px;width:1px;height:15px;background:#aca899"></div><div class="a" style="left:205px;top:749px;width:1px;height:15px;background:#fff"></div>
<div class="a" style="left:336px;top:749px;width:1px;height:15px;background:#aca899"></div><div class="a" style="left:337px;top:749px;width:1px;height:15px;background:#fff"></div>
<div class="a" style="left:455px;top:749px;width:1px;height:15px;background:#aca899"></div><div class="a" style="left:456px;top:749px;width:1px;height:15px;background:#fff"></div>
<div class="a" style="left:539px;top:749px;width:1px;height:15px;background:#aca899"></div><div class="a" style="left:540px;top:749px;width:1px;height:15px;background:#fff"></div>
<div class="a" style="left:622px;top:749px;width:1px;height:15px;background:#aca899"></div><div class="a" style="left:623px;top:749px;width:1px;height:15px;background:#fff"></div>
<div class="a" style="left:703px;top:749px;width:1px;height:15px;background:#aca899"></div><div class="a" style="left:704px;top:749px;width:1px;height:15px;background:#fff"></div>
<div class="a" style="left:786px;top:749px;width:1px;height:15px;background:#aca899"></div><div class="a" style="left:787px;top:749px;width:1px;height:15px;background:#fff"></div>
<div class="a" style="left:866px;top:749px;width:1px;height:15px;background:#aca899"></div><div class="a" style="left:867px;top:749px;width:1px;height:15px;background:#fff"></div>
<svg class="a" style="left:0;top:0" width="1032" height="770" viewBox="0 0 1032 770" shape-rendering="crispEdges"><rect x="872" y="751" width="1" height="12" fill="#1b3a5c"/><rect x="872" y="751" width="1" height="11" fill="#6b8e23"/><rect x="874" y="751" width="1" height="12" fill="#1b3a5c"/><rect x="874" y="751" width="1" height="10" fill="#6b8e23"/><rect x="876" y="751" width="1" height="12" fill="#1b3a5c"/><rect x="876" y="751" width="1" height="9" fill="#6b8e23"/><rect x="878" y="751" width="1" height="12" fill="#1b3a5c"/><rect x="878" y="751" width="1" height="8" fill="#6b8e23"/><rect x="880" y="751" width="1" height="12" fill="#1b3a5c"/><rect x="880" y="751" width="1" height="7" fill="#6b8e23"/><rect x="882" y="751" width="1" height="12" fill="#1b3a5c"/><rect x="882" y="751" width="1" height="6" fill="#6b8e23"/><rect x="884" y="751" width="1" height="12" fill="#1b3a5c"/><rect x="884" y="751" width="1" height="5" fill="#6b8e23"/><rect x="886" y="751" width="1" height="12" fill="#1b3a5c"/><rect x="886" y="751" width="1" height="4" fill="#6b8e23"/><rect x="888" y="751" width="1" height="12" fill="#1b3a5c"/><rect x="888" y="751" width="1" height="3" fill="#6b8e23"/><rect x="890" y="751" width="1" height="12" fill="#1b3a5c"/><rect x="890" y="751" width="1" height="2" fill="#6b8e23"/><rect x="892" y="751" width="1" height="12" fill="#1b3a5c"/><rect x="892" y="751" width="1" height="2" fill="#6b8e23"/><rect x="894" y="751" width="1" height="12" fill="#1b3a5c"/><rect x="894" y="751" width="1" height="2" fill="#6b8e23"/></svg>
<svg class="a" style="left:0;top:0" width="1032" height="770" viewBox="0 0 1032 770"><path d="M1014 765l12-12M1018 765l8-8M1022 765l4-4" stroke="#aca899" stroke-width="1.200"/><path d="M1015 765l11-11M1019 765l7-7M1023 765l3-3" stroke="#fff" stroke-width="1"/></svg>
<div class="a" style="left:4px;top:766px;width:1024px;height:4px;background:#2a5fdb"></div>
<div class="a" style="left:928px;top:767px;width:100px;height:3px;background:#1b9bee;border-left:1px solid #1a4aa8"></div>
<div class="a" style="left:4px;top:767px;width:109px;height:3px;background:#3f9a40;border-top:1px solid #2f7a32;border-right:1px solid #2f7a32;border-radius:0 4px 0 0"></div>
<div class="a" style="left:4px;top:766px;width:1024px;height:1px;background:#2f6df0"></div>
</div></body></html>
